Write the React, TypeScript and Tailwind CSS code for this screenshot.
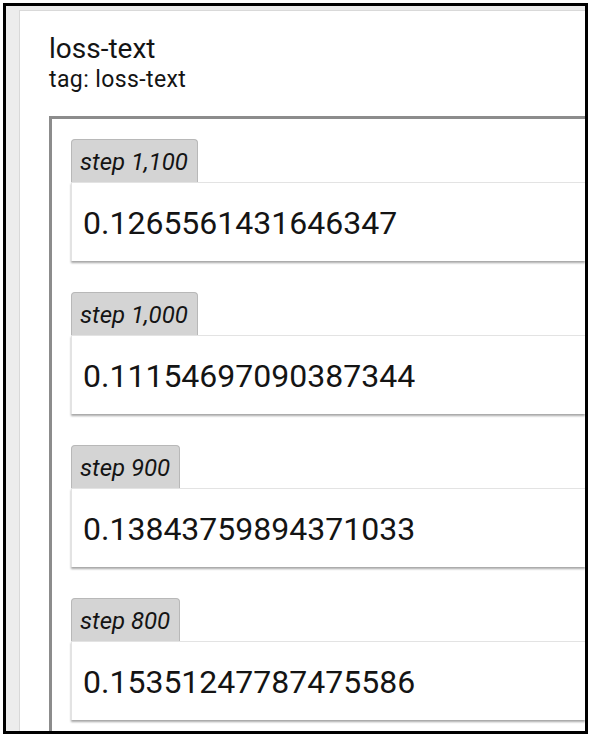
const items = [
  { step: "1,100", value: "0.1265561431646347" },
  { step: "1,000", value: "0.11154697090387344" },
  { step: "900", value: "0.13843759894371033" },
  { step: "800", value: "0.15351247787475586" },
];

export default function App() {
  return (
    <div className="w-[591px] h-[737px] bg-white p-[3px] font-['Roboto',sans-serif] text-[#141414]">
      <div className="h-full border-[3px] border-black bg-[#ededed] pl-[13px] pt-[4px] overflow-hidden">
        <div className="h-full bg-white border-l border-t border-[#d9d9d9] pl-[29px] pt-[22px] overflow-hidden">
          <div className="text-[28px] leading-[32px]">loss-text</div>
          <div className="text-[23px] leading-[30px] tracking-[0.4px]">tag: loss-text</div>

          <div className="mt-[21px] h-[700px] border-t-[3px] border-l-[3px] border-[#8c8c8c] pl-[19px] pt-[20px] flex flex-col gap-[31px]">
            {items.map(it => (
              <div key={it.step} className="flex flex-col">
                <div className="self-start h-[43px] bg-[#d4d4d4] border border-b-0 border-[#b8b8b8] rounded-t-[4px] pl-[8px] pr-[9px] pt-[8px]">
                  <span className="italic text-[24px] leading-[28px]">step {it.step}</span>
                </div>
                <div className="h-[79px] bg-white border-l border-t border-[#e3e3e3] shadow-[0_2px_2px_rgba(0,0,0,0.35)] pl-[11px] pt-[22px]">
                  <span className="text-[32px] leading-[37px]">{it.value}</span>
                </div>
              </div>
            ))}
          </div>
        </div>
      </div>
    </div>
  );
}
